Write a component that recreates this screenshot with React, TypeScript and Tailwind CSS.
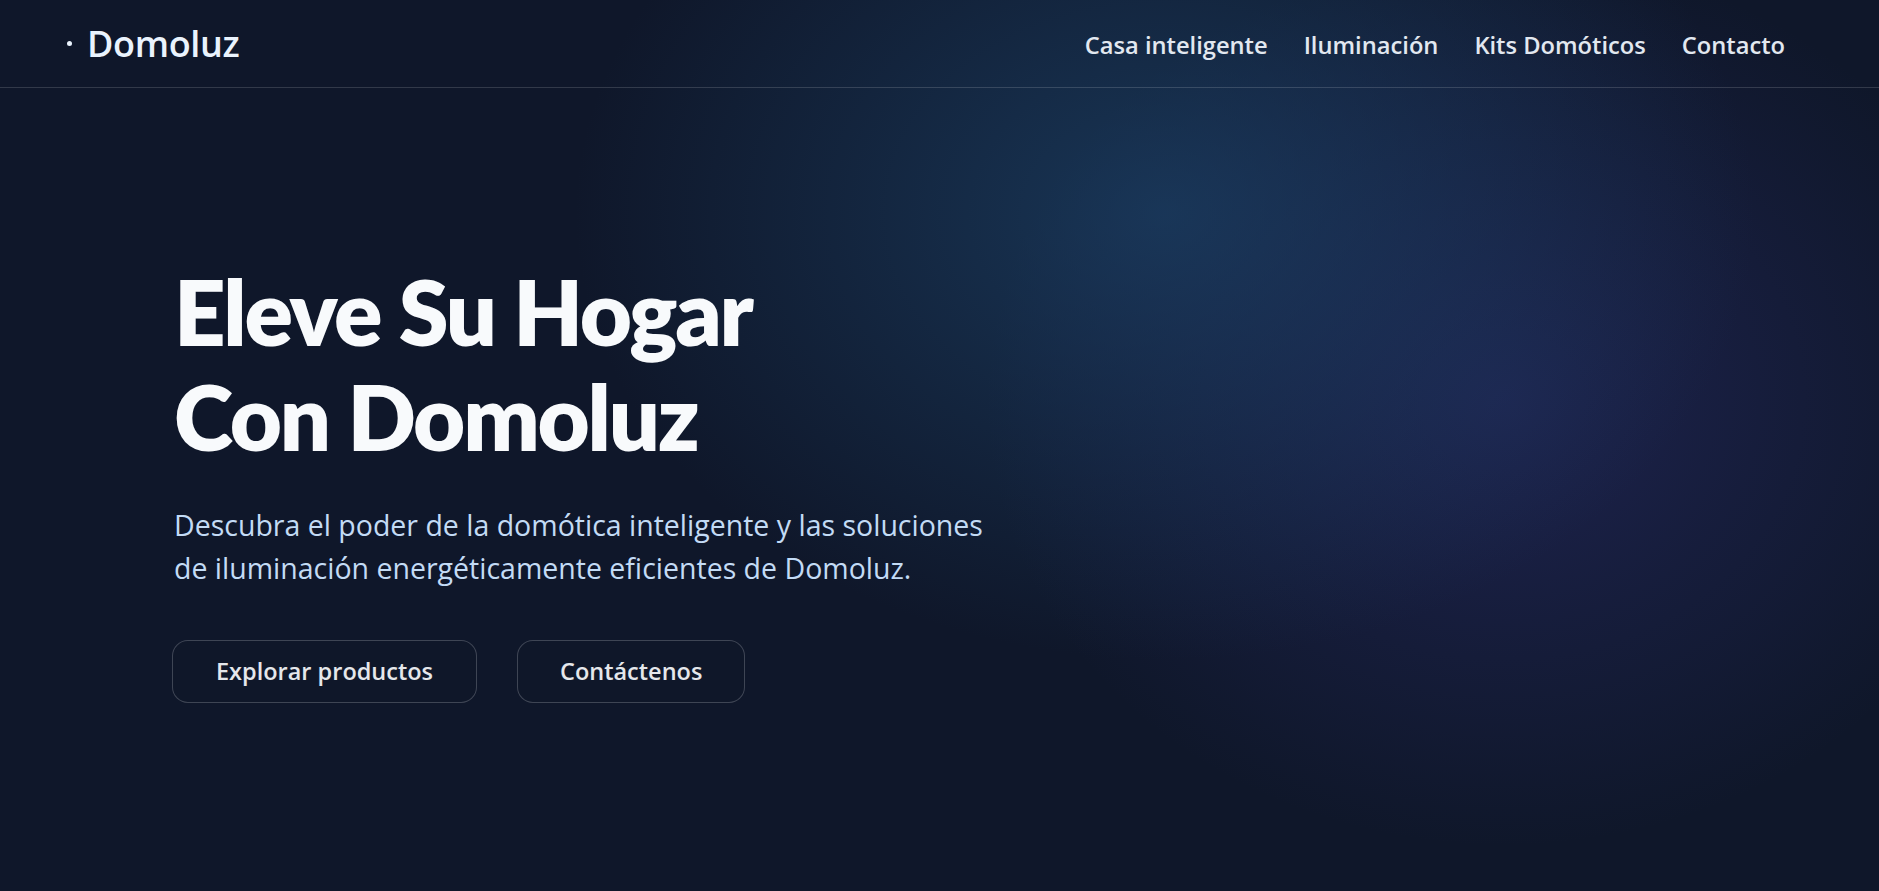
import { useState } from 'react'

const navItems = ['Casa inteligente', 'Iluminación', 'Kits Domóticos', 'Contacto']

export default function App() {
  const [active, setActive] = useState<string | null>(null)

  return (
    <div className="min-h-[891px] w-full bg-[#0f172a] bg-[radial-gradient(ellipse_820px_620px_at_62%_24%,rgba(28,66,104,0.7),transparent_72%),radial-gradient(ellipse_720px_620px_at_80%_45%,rgba(62,62,160,0.3),transparent_72%)] font-['Open_Sans',sans-serif] text-white">
      {/* Header */}
      <header className="flex h-[88px] items-center justify-between border-b border-white/15 pl-[67px] pr-[94px]">
        <a href="#" className="flex items-center gap-[15px]">
          <span className="h-[5px] w-[5px] rounded-full bg-[#eaf3fd]" />
          <span className="text-[36px] font-semibold leading-none tracking-[-0.01em] text-[#eaf3fd]">Domoluz</span>
        </a>
        <nav className="flex items-center gap-[36px] pt-[4px]">
          {navItems.map((item) => (
            <a
              key={item}
              href="#"
              onClick={() => setActive(item)}
              className={`text-[23.7px] font-semibold text-[#e2e8f0] hover:text-white ${active === item ? 'text-white' : ''}`}
            >
              {item}
            </a>
          ))}
        </nav>
      </header>

      {/* Hero */}
      <main className="pl-[174px] pt-[171px]">
        <h1 className="font-['Lato',sans-serif] text-[90px] font-extrabold leading-[105px] tracking-[-0.025em] text-[#f8fafc]">
          Eleve Su Hogar
          <br />
          Con Domoluz
        </h1>
        <p className="mt-[35px] max-w-[900px] text-[28.5px] leading-[43px] text-[#c3dbf5]">
          Descubra el poder de la domótica inteligente y las soluciones
          <br />
          de iluminación energéticamente eficientes de Domoluz.
        </p>
        <div className="-ml-[2px] mt-[50px] flex gap-[40px]">
          <button className="h-[63px] rounded-[16px] border border-white/20 bg-[#0f172a]/60 px-[43px] text-[23.5px] font-semibold text-[#e5e7eb] hover:bg-white/5">
            Explorar productos
          </button>
          <button className="h-[63px] rounded-[16px] border border-white/20 bg-[#0f172a]/60 px-[42px] text-[23.5px] font-semibold text-[#e5e7eb] hover:bg-white/5">
            Contáctenos
          </button>
        </div>
      </main>
    </div>
  )
}
